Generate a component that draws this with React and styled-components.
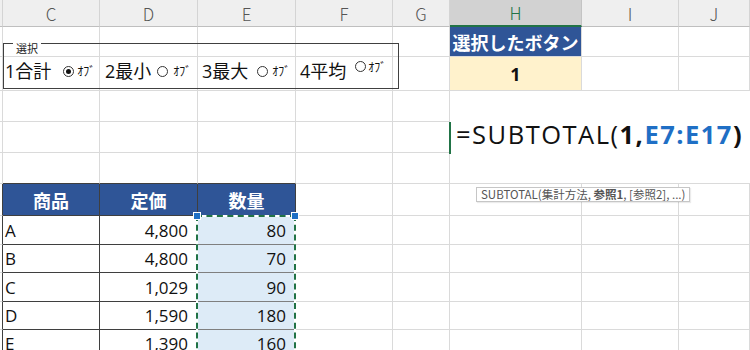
import React from 'react';
import styled, { createGlobalStyle } from 'styled-components';

const GRID = '#dadada';
const DARK = '#3f3f3f';
const BLUE = '#2f5597';
const GREEN = '#217346';

const GlobalStyle = createGlobalStyle`
  body {
    margin: 0;
    background: #fff;
    font-family: 'Open Sans', 'Noto Sans CJK JP', sans-serif;
  }
`;

const Sheet = styled.div`
  position: relative;
  display: grid;
  grid-template-columns: 3px 97px 98px 98px 97px 57px 132px 97px 71px;
  grid-template-rows: 27px 30px 34px 31px 31px 31px 32px 29px 28px 29px 28px 28px;
  width: 750px;
  height: 350px;
  overflow: hidden;
  background: #fff;
`;

const ColHead = styled.div`
  grid-row: 1;
  grid-column: ${(p) => p.$col};
  display: flex;
  align-items: center;
  justify-content: center;
  box-sizing: border-box;
  background: ${(p) => (p.$active ? '#d2d2d2' : '#efefef')};
  border-right: 1px solid ${(p) => (p.$active ? '#c4c4c4' : '#d4d4d4')};
  border-bottom: ${(p) => (p.$active ? `2px solid ${GREEN}` : '1px solid #bfbfbf')};
  color: ${(p) => (p.$active ? GREEN : '#555')};
  font-family: 'Noto Sans CJK JP', sans-serif;
  font-size: 17px;
  font-weight: 300;
`;

const Cell = styled.div`
  grid-row: ${(p) => p.$row};
  grid-column: ${(p) => p.$col};
  display: flex;
  align-items: center;
  justify-content: ${(p) => p.$align || 'flex-start'};
  box-sizing: border-box;
  padding: ${(p) => (p.$align === 'flex-end' ? '0 9px 0 0' : p.$align === 'center' ? '0' : '0 0 0 2px')};
  background: ${(p) => p.$bg || '#fff'};
  color: ${(p) => p.$color || '#111'};
  font-size: ${(p) => p.$size || 17}px;
  font-weight: ${(p) => (p.$bold ? 700 : 400)};
  border-right: 1px solid ${(p) => p.$rb || GRID};
  border-bottom: 1px solid ${(p) => p.$bb || GRID};
  white-space: nowrap;
`;

const Editor = styled.div`
  position: relative;
  grid-column: 7 / 10;
  grid-row: 4 / 7;
  margin-bottom: 1px;
  background: #fff;
  z-index: 2;
  padding: 28px 0 0 6px;
  font-size: 25.5px;
  line-height: 31px;
  color: #111;
  white-space: nowrap;
  letter-spacing: 1.5px;
`;

const Cursor = styled.div`
  position: absolute;
  left: -1px;
  top: 31px;
  width: 2px;
  height: 32px;
  background: ${GREEN};
`;

const Token = styled.span`
  font-weight: ${(p) => (p.$bold ? 700 : 400)};
  color: ${(p) => p.$color || '#111'};
`;

const Tip = styled.div`
  position: absolute;
  left: 26px;
  top: 96px;
  height: 15px;
  box-sizing: border-box;
  padding: 0 4px;
  background: #fff;
  border: 1px solid #c6c6c6;
  box-shadow: 1px 1px 1px rgba(0, 0, 0, 0.08);
  font-family: 'Noto Sans CJK JP', sans-serif;
  font-size: 11.5px;
  line-height: 13px;
  color: #555;
  letter-spacing: 0;
`;

const Ants = styled.div`
  position: relative;
  grid-column: 4 / 5;
  grid-row: 8 / 13;
  margin: -1px 0 0 -2px;
  width: 100px;
  box-sizing: border-box;
  border: 2px solid #fff;
  z-index: 1;
  pointer-events: none;

  &::after {
    content: '';
    position: absolute;
    inset: -2px;
    border: 2px dashed ${GREEN};
  }
`;

const Handle = styled.div`
  position: absolute;
  top: -5px;
  ${(p) => (p.$side === 'left' ? 'left: -5px;' : 'right: -5px;')}
  width: 6px;
  height: 6px;
  background: #1f6fc5;
  border: 1px solid #fff;
  z-index: 2;
`;

const GroupBox = styled.div`
  position: absolute;
  left: 3px;
  top: 43px;
  width: 396px;
  height: 46px;
  box-sizing: border-box;
  border: 1px solid #404040;
  display: flex;
  align-items: flex-end;
  padding: 0 0 6px 1px;
  z-index: 3;
  background: transparent;
`;

const Legend = styled.span`
  position: absolute;
  left: 9px;
  top: -3px;
  padding: 0 3px;
  background: #fff;
  font-family: 'Noto Sans CJK JP', sans-serif;
  font-size: 11px;
  line-height: 14px;
  color: #222;
`;

const Option = styled.div`
  display: flex;
  align-items: center;
  width: ${(p) => p.$w}px;
`;

const OptLabel = styled.span`
  font-size: 18px;
  line-height: 22px;
  color: #111;
`;

const Radio = styled.span`
  display: inline-flex;
  align-items: center;
  justify-content: center;
  margin-left: ${(p) => p.$gap}px;
  transform: translateY(${(p) => p.$lift || 0}px);
  width: 11px;
  height: 11px;
  box-sizing: border-box;
  border: 1.5px solid #333;
  border-radius: 50%;
  background: #fff;

  &::after {
    content: '';
    display: ${(p) => (p.$on ? 'block' : 'none')};
    width: 5px;
    height: 5px;
    border-radius: 50%;
    background: #111;
  }
`;

const Caption = styled.span`
  margin-left: ${(p) => p.$gap}px;
  transform: translateY(${(p) => p.$lift || -1}px);
  font-family: 'Noto Sans CJK JP', sans-serif;
  font-size: 12px;
  color: #111;
`;

const columns = ['', 'C', 'D', 'E', 'F', 'G', 'H', 'I', 'J'];

const products = [
  ['A', '4,800', '80'],
  ['B', '4,800', '70'],
  ['C', '1,029', '90'],
  ['D', '1,590', '180'],
  ['E', '1,390', '160'],
];

const options = [
  { label: '1合計', w: 100, gap: 12, capGap: 3, on: true },
  { label: '2最小', w: 97, gap: 6, capGap: 5 },
  { label: '3最大', w: 98, gap: 9, capGap: 4 },
  { label: '4平均', w: 98, gap: 9, capGap: 2, lift: -5, capLift: -5 },
];

const blank = (extra = {}) => ({ text: '', ...extra });

// one entry per sheet row, nine cells each (B sliver .. J)
const buildRows = () => {
  const rows = [];
  const plain = () => columns.map(() => blank());

  const r1 = plain();
  r1[6] = { text: '選択したボタン', bg: BLUE, color: '#fff', bold: true, align: 'center', size: 18 };
  rows.push(r1);

  const r2 = plain();
  r2[6] = { text: '1', bg: '#fff2cc', bold: true, align: 'center', size: 18 };
  rows.push(r2);

  rows.push(plain());
  rows.push(plain());

  const r5 = plain();
  [1, 2, 3].forEach((i) => (r5[i] = blank({ bb: DARK })));
  rows.push(r5);

  const head = plain();
  head[0] = blank({ rb: DARK });
  ['商品', '定価', '数量'].forEach((t, i) => {
    head[i + 1] = { text: t, bg: BLUE, color: '#fff', bold: true, align: 'center', size: 18, rb: DARK, bb: DARK };
  });
  rows.push(head);

  products.forEach(([name, price, qty]) => {
    const r = plain();
    r[0] = blank({ rb: DARK });
    r[1] = { text: name, rb: DARK, bb: DARK };
    r[2] = { text: price, align: 'flex-end', rb: DARK, bb: DARK };
    r[3] = { text: qty, align: 'flex-end', bg: '#ddebf7', rb: DARK, bb: '#7f7f7f' };
    rows.push(r);
  });

  return rows;
};

const rows = buildRows();

export default function App() {
  return (
    <>
      <GlobalStyle />
      <Sheet>
        {columns.map((c, i) => (
          <ColHead key={`h${i}`} $col={i + 1} $active={c === 'H'}>
            {c}
          </ColHead>
        ))}

        {rows.map((row, r) =>
          row.map((cell, c) => (
            <Cell
              key={`${r}-${c}`}
              $row={r + 2}
              $col={c + 1}
              $bg={cell.bg}
              $color={cell.color}
              $bold={cell.bold}
              $align={cell.align}
              $size={cell.size}
              $rb={cell.rb}
              $bb={cell.bb}
            >
              {cell.text}
            </Cell>
          ))
        )}

        <Editor>
          <Cursor />
          =SUBTOTAL(
          <Token $bold>1,</Token>
          <Token $bold $color="#1f6fc5">
            E7:E17
          </Token>
          <Token $bold>)</Token>
          <Tip>
            SUBTOTAL(集計方法, <Token $bold $color="#555">参照1</Token>, [参照2], ...)
          </Tip>
        </Editor>

        <Ants>
          <Handle $side="left" />
          <Handle $side="right" />
        </Ants>

        <GroupBox>
          <Legend>選択</Legend>
          {options.map((o) => (
            <Option key={o.label} $w={o.w}>
              <OptLabel>{o.label}</OptLabel>
              <Radio $gap={o.gap} $on={o.on} $lift={o.lift} />
              <Caption $gap={o.capGap} $lift={o.capLift}>
                ｵﾌﾞ
              </Caption>
            </Option>
          ))}
        </GroupBox>
      </Sheet>
    </>
  );
}
